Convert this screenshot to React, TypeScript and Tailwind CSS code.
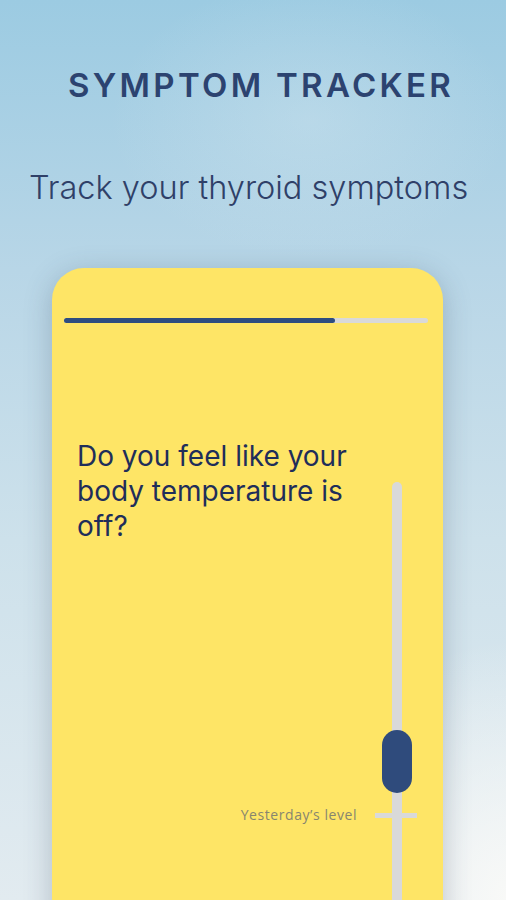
export default function App() {
  return (
    <div
      className="relative flex h-[900px] w-[506px] flex-col overflow-hidden bg-[radial-gradient(ellipse_200px_260px_at_510px_900px,rgba(250,250,248,0.95),rgba(250,250,248,0)),radial-gradient(ellipse_200px_140px_at_310px_120px,rgba(215,232,240,0.35),rgba(215,232,240,0)),linear-gradient(180deg,#9ccbe2_0%,#b8d6e7_30%,#cde1eb_60%,#e2ebf0_100%)]"
      style={{ fontFamily: "Inter, 'Liberation Sans', sans-serif" }}
    >
      {/* Header */}
      <h1 className="mt-[65px] pl-[68px] text-[33px] font-semibold leading-[40px] tracking-[0.1em] whitespace-nowrap text-[#2c4370]">
        SYMPTOM TRACKER
      </h1>
      <p className="mt-[65px] pl-[29px] text-[32.5px] font-light leading-[36px] whitespace-nowrap text-[#2f4068]">
        Track your thyroid symptoms
      </p>

      {/* Question card */}
      <div className="ml-[52px] mt-[62px] flex h-[680px] w-[391px] shrink-0 flex-col rounded-[32px] bg-[#fee566] pt-[50px] shadow-[0_6px_28px_rgba(50,70,90,0.28)]">
        <div className="ml-[12px] mr-[15px] flex h-[5px] rounded-full bg-[#d9d9d9]">
          <div className="h-full w-[271px] rounded-full bg-[#2e4d80]" />
        </div>

        <div className="flex flex-1 pl-[25px] pr-[41px]">
          <p className="mt-[116px] w-[290px] text-[28px] leading-[35px] text-[#1f2e5a]">
            Do you feel like your body temperature is off?
          </p>

          {/* Vertical slider */}
          <div className="relative ml-auto mt-[159px] w-[10px] rounded-t-full bg-[#d9d9d9]">
            <div className="absolute left-[-10px] top-[248px] h-[63px] w-[30px] rounded-full bg-[#2f4b7c]" />
            <div className="absolute left-[-17px] top-[331px] h-[5px] w-[42px] bg-[#d9d9d9]" />
            <span
              className="absolute right-[45px] top-[324px] whitespace-nowrap text-[14px] leading-[18px] tracking-[0.04em] text-[#87856f]"
              style={{ fontFamily: "'Open Sans', 'Liberation Sans', sans-serif" }}
            >
              Yesterday’s level
            </span>
          </div>
        </div>
      </div>
    </div>
  );
}
